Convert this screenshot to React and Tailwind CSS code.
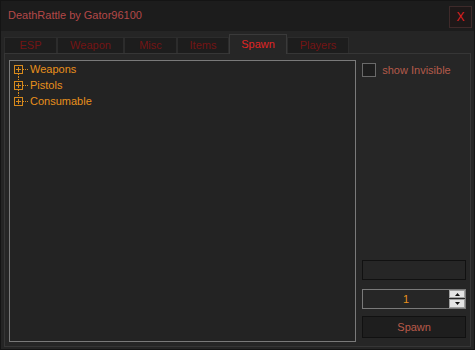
import { useState } from 'react';

const tabs = [
  { name: 'ESP', w: 'w-[53px]' },
  { name: 'Weapon', w: 'w-[67px]' },
  { name: 'Misc', w: 'w-[53px]' },
  { name: 'Items', w: 'w-[52px]' },
  { name: 'Spawn', w: 'w-[58px]' },
  { name: 'Players', w: 'w-[62px]' },
];

const nodes = ['Weapons', 'Pistols', 'Consumable'];

function Expander({ first, last }) {
  // plus box with dotted connectors, like the WinForms tree
  return (
    <svg width="19" height="16" className="shrink-0">
      {!first && <line x1="8.5" y1="0" x2="8.5" y2="4" stroke="#d88a1c" strokeDasharray="1 1" />}
      {!last && <line x1="8.5" y1="13" x2="8.5" y2="16" stroke="#d88a1c" strokeDasharray="1 1" />}
      <rect x="4.5" y="4.5" width="8" height="8" fill="none" stroke="#d88a1c" />
      <line x1="6" y1="8.5" x2="11" y2="8.5" stroke="#d88a1c" />
      <line x1="8.5" y1="6" x2="8.5" y2="11" stroke="#d88a1c" />
      <line x1="13" y1="8.5" x2="19" y2="8.5" stroke="#d88a1c" strokeDasharray="1 1" />
    </svg>
  );
}

export default function App() {
  const [tab, setTab] = useState('Spawn');
  const [count, setCount] = useState(1);
  const [invisible, setInvisible] = useState(false);

  return (
    <div
      className="w-[475px] h-[350px] bg-[#252525] border border-[#141414] flex flex-col overflow-hidden"
      style={{ fontFamily: '"Liberation Sans", Arial, sans-serif' }}
    >
      <div className="h-[30px] bg-[#1c1c1c] flex items-center justify-between pl-[7px] pr-[2px] shrink-0">
        <span className="text-[11px] text-[#b44848] -mt-[1px]">DeathRattle by Gator96100</span>
        <button className="w-[23px] h-[22px] mt-[1px] bg-[#1e1818] border border-[#3e2a2a] text-[#e02020] text-[12px] leading-none flex items-center justify-center">
          X
        </button>
      </div>

      <div className="flex items-end pl-[3px] pt-[3px] h-[22px] shrink-0">
        {tabs.map((t) =>
          t.name === tab ? (
            <div
              key={t.name}
              className={`${t.w} h-[20px] -mb-[1px] z-10 bg-[#262626] border border-b-0 border-[#3a3a3a] text-[#e02424] text-[11px] flex items-center justify-center`}
            >
              {t.name}
            </div>
          ) : (
            <div
              key={t.name}
              onClick={() => setTab(t.name)}
              className={`${t.w} h-[16px] bg-[#1d1d1d] border border-b-0 border-[#2c2c2c] text-[#741414] text-[11px] flex items-center justify-center cursor-default`}
            >
              {t.name}
            </div>
          )
        )}
      </div>

      <div className="mx-[3px] h-[294px] border border-[#363636] bg-[#262626] flex gap-[6px] pt-[6px] pb-[4px] pl-[4px] pr-[4px]">
        <div className="w-[348px] h-full border border-[#7a7a7a] bg-[#232323]">
          {nodes.map((n, i) => (
            <div key={n} className="h-[16px] flex items-center">
              <Expander first={i === 0} last={i === nodes.length - 1} />
              <span className="text-[11px] text-[#e8901c] leading-none ml-[1px]">{n}</span>
            </div>
          ))}
        </div>

        <div className="w-[104px] flex flex-col pb-[4px]">
          <label className="flex items-center mt-[2px] gap-[6px]" onClick={() => setInvisible(!invisible)}>
            <span className="w-[14px] h-[14px] border border-[#6a6a6a] bg-[#1e1e1e] flex items-center justify-center text-[10px] text-[#e8901c]">
              {invisible ? '✓' : ''}
            </span>
            <span className="text-[11px] text-[#b45a4a]">show Invisible</span>
          </label>

          <div className="flex-1" />

          <div className="h-[20px] border border-[#111111] bg-[#262626]" />

          <div className="mt-[9px] h-[20px] border border-[#7a7a7a] bg-[#262626] flex">
            <span className="flex-1 text-center text-[11px] text-[#e8901c] leading-[18px]">{count}</span>
            <div className="w-[16px] flex flex-col gap-[1px]">
              <button
                onClick={() => setCount(count + 1)}
                className="h-[8px] bg-[#e4e4e4] border border-[#a0a0a0] flex items-center justify-center"
              >
                <svg width="5" height="3"><path d="M2.5 0 L5 3 L0 3 Z" fill="#111" /></svg>
              </button>
              <button
                onClick={() => setCount(Math.max(0, count - 1))}
                className="h-[9px] bg-[#e4e4e4] border border-[#a0a0a0] flex items-center justify-center"
              >
                <svg width="5" height="3"><path d="M0 0 L5 0 L2.5 3 Z" fill="#111" /></svg>
              </button>
            </div>
          </div>

          <button className="mt-[7px] h-[22px] border border-[#111111] bg-[#1e1e1e] text-[11px] text-[#b85a4a]">
            Spawn
          </button>
        </div>
      </div>
    </div>
  );
}
